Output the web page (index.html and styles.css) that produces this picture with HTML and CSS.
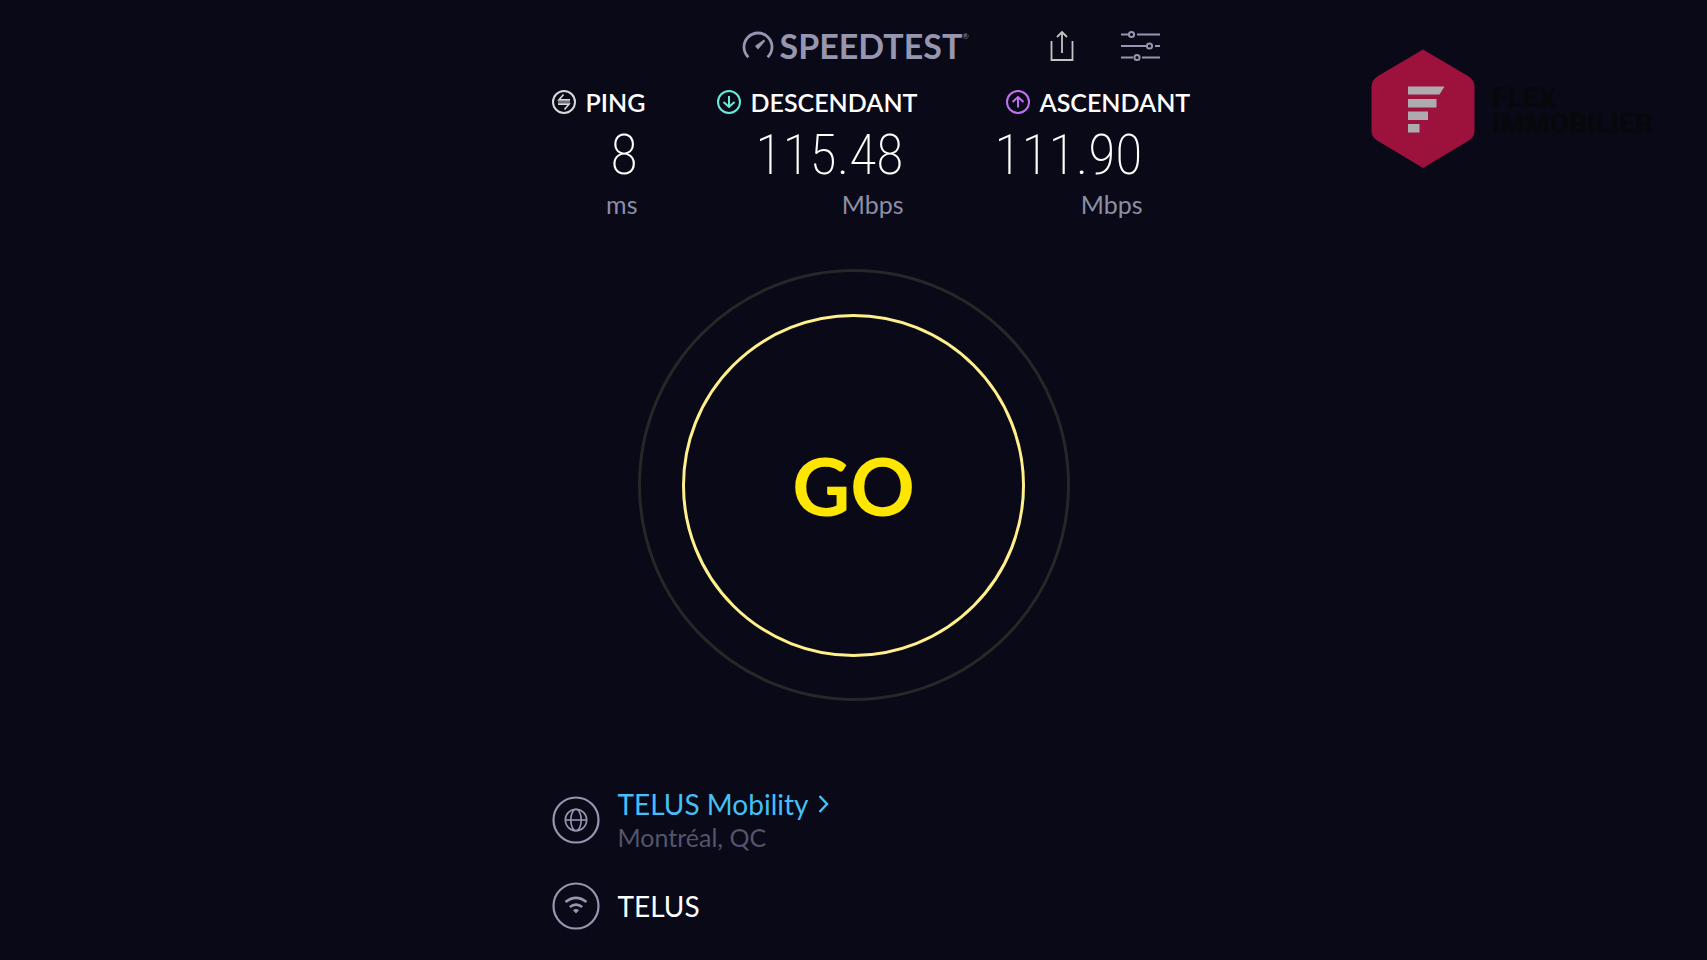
FILE: index.html
```
<!DOCTYPE html>
<html lang="fr">
<head>
<meta charset="utf-8">
<meta name="viewport" content="width=device-width, initial-scale=1">
<title>Speedtest</title>
<link rel="stylesheet" href="styles.css">
</head>
<body>
<main class="panel">
  <header class="topbar">
    <div class="brand">
      <svg class="brand-icon" width="32" height="32" viewBox="0 0 32 32" fill="none" aria-hidden="true">
        <path d="M6.400 27.200A14 14 0 1 1 25.600 27.200" stroke="currentColor" stroke-width="2.800"/>
        <path d="M22 9.500L13 16L16 19.500L23.200 11Z" fill="currentColor"/>
      </svg>
      <h1 class="brand-name">SPEEDTEST<sup class="brand-mark">®</sup></h1>
    </div>
    <div class="actions">
      <button class="icon-button icon-button--share" type="button" aria-label="Partager">
        <svg width="24" height="32" viewBox="0 0 24 32" fill="none" stroke="currentColor" stroke-width="1.800" aria-hidden="true">
          <path d="M1.500 11V30H22.500V11M12 23V2M7 7L12 2L17 7"/>
        </svg>
      </button>
      <button class="icon-button" type="button" aria-label="Paramètres">
        <svg width="40" height="32" viewBox="0 0 40 32" fill="none" stroke="currentColor" stroke-width="2" aria-hidden="true">
          <path d="M1 4.500H8M17 4.500H40M1 16H26M35 16H40M1 27.500H13M22 27.500H40"/>
          <circle cx="11.500" cy="4.500" r="2.600"/><circle cx="29.500" cy="16" r="2.600"/><circle cx="17" cy="27.500" r="2.600"/>
        </svg>
      </button>
    </div>
  </header>

  <section class="results" aria-label="Résultats">
    <div class="result result--ping">
      <h2 class="result-label">
        <svg width="24" height="24" viewBox="0 0 24 24" fill="none" stroke="currentColor" stroke-width="2" aria-hidden="true">
          <circle cx="12" cy="12" r="11"/>
          <path d="M11.500 4.500L7 9.800H18M6 14.200H17L12.500 19.500" stroke-width="1.700"/><path d="M6 12H18" stroke-width="1"/>
        </svg>PING</h2>
      <div class="figures"><span class="value">8</span><span class="unit">ms</span></div>
    </div>
    <div class="result result--down">
      <h2 class="result-label">
        <svg width="24" height="24" viewBox="0 0 24 24" fill="none" stroke="currentColor" stroke-width="2" aria-hidden="true">
          <circle cx="12" cy="12" r="11"/><path d="M12 6V17M6.500 12L12 17L17.500 12"/>
        </svg>DESCENDANT</h2>
      <div class="figures"><span class="value">115.48</span><span class="unit">Mbps</span></div>
    </div>
    <div class="result result--up">
      <h2 class="result-label">
        <svg width="24" height="24" viewBox="0 0 24 24" fill="none" stroke="currentColor" stroke-width="2" aria-hidden="true">
          <circle cx="12" cy="12" r="11"/><path d="M12 17.500V7M6.500 12L12 7L17.500 12"/>
        </svg>ASCENDANT</h2>
      <div class="figures"><span class="value">111.90</span><span class="unit">Mbps</span></div>
    </div>
  </section>

  <div class="start">
    <button class="go" type="button"><span class="go-ring">GO</span></button>
  </div>

  <section class="connection" aria-label="Connexion">
    <div class="host">
      <svg class="host-icon" width="48" height="48" viewBox="0 0 48 48" fill="none" stroke="currentColor" aria-hidden="true">
        <circle cx="24" cy="24" r="22.500" stroke-width="2.200"/>
        <g stroke-width="1.600"><circle cx="24" cy="24" r="10.700"/><ellipse cx="24" cy="24" rx="5.200" ry="10.700"/><path d="M13 24H35"/></g>
      </svg>
      <div class="host-text">
        <a class="host-link" href="#serveur">TELUS Mobility<svg width="11" height="18" viewBox="0 0 11 18" fill="none" stroke="currentColor" stroke-width="2.500" aria-hidden="true"><path d="M1.500 1L9 9L1.500 17"/></svg></a>
        <span class="host-place">Montréal, QC</span>
      </div>
    </div>
    <div class="host">
      <svg class="host-icon" width="48" height="48" viewBox="0 0 48 48" fill="none" stroke="currentColor" aria-hidden="true">
        <circle cx="24" cy="24" r="22.500" stroke-width="2.200"/>
        <path d="M13.500 20Q24 11.800 34.500 20M17.800 25Q24 20.200 30.200 25" stroke-width="2.600"/>
        <path d="M24 31.500L21 28.200Q24 25.900 27 28.200Z" fill="currentColor" stroke="none"/>
      </svg>
      <span class="host-name">TELUS</span>
    </div>
  </section>
</main>

<aside class="watermark">
  <svg width="104" height="120" viewBox="0 0 104 120" aria-hidden="true">
    <path d="M52 0.500L97 27Q103.500 31 103.500 38V82Q103.500 88 97 92L52 119L7 92Q0.500 88 0.500 82V38Q0.500 31 7 27Z" fill="#9c123c"/>
    <path d="M37 37.500H73.500L68.500 45.500H37ZM37 50H65.500V58.500H37ZM37 62.500H57V71H37ZM37 75H48.500V83.500H37Z" fill="#adabb0"/>
  </svg>
  <p class="watermark-name">FLEX<br>IMMOBILIER</p>
</aside>
</body>
</html>
```
FILE: styles.css
```
* {
  box-sizing: border-box;
}

body {
  margin: 0;
  position: relative;
  min-height: 100vh;
  background: #090917;
  color: #fff;
  font-family: Lato, "Open Sans", sans-serif;
}

h1,
h2,
p {
  margin: 0;
}

button {
  padding: 0;
  border: 0;
  background: none;
  font: inherit;
  cursor: pointer;
}

svg {
  display: block;
  flex: none;
}

.panel {
  max-width: 684px;
  margin: 0 auto;
  padding-bottom: 28px;
}

.topbar {
  display: flex;
  justify-content: space-between;
  align-items: center;
  height: 88px;
  padding: 4px 36px 0 230px;
  color: #9696b0;
}

.brand {
  display: flex;
  align-items: center;
  gap: 6px;
}

.brand-name {
  display: flex;
  font-size: 34px;
  line-height: 40px;
  font-weight: 700;
}

.brand-mark {
  font-size: 8px;
  line-height: 20px;
  font-weight: 400;
}

.actions {
  display: flex;
  align-items: center;
  gap: 46px;
}

.icon-button {
  color: #9696b0;
}

.icon-button--share {
  color: #c4c4c4;
}

.results {
  display: grid;
  grid-template-columns: 165px 289px auto;
  justify-content: start;
  padding-left: 40px;
}

.result-label {
  display: flex;
  align-items: center;
  gap: 10px;
  font-size: 25px;
  line-height: 28px;
  font-weight: 600;
}

.result-label svg {
  color: #d8d8dc;
}

.result--down svg {
  color: #6aeadc;
}

.result--up svg {
  color: #bf71f2;
}

.figures {
  display: flex;
  flex-direction: column;
  align-items: flex-end;
  width: 187px;
}

.result--ping .figures {
  width: 86px;
}

.result--up .figures {
  width: 137px;
}

.value {
  margin: 8px 0;
  font-family: "Roboto Condensed", Roboto, sans-serif;
  font-size: 56px;
  line-height: 62px;
  font-weight: 200;
}

.unit {
  color: #8d8da6;
  font-size: 25px;
  line-height: 20px;
}

.start {
  display: flex;
  justify-content: center;
  padding: 55px 0 86px;
}

.go {
  display: grid;
  place-items: center;
  width: 432px;
  aspect-ratio: 1;
  border: 3px solid #272727;
  border-radius: 50%;
}

.go-ring {
  display: grid;
  place-items: center;
  width: 343px;
  aspect-ratio: 1;
  border: 3px solid #fff08c;
  border-radius: 50%;
  color: #ffe600;
  font-size: 80px;
  line-height: 80px;
  font-weight: 700;
}

.connection {
  display: grid;
  gap: 29px;
  padding-left: 40px;
}

.host {
  display: flex;
  align-items: center;
  gap: 18px;
}

.host-icon {
  color: #9696b0;
}

.host-text {
  display: flex;
  flex-direction: column;
}

.host-link {
  display: flex;
  align-items: center;
  gap: 10px;
  color: #45bff5;
  font-size: 28px;
  line-height: 34px;
  text-decoration: none;
}

.host-place {
  color: #54546a;
  font-size: 25px;
  line-height: 32px;
}

.host-name {
  font-size: 28px;
  line-height: 34px;
}

.watermark {
  position: absolute;
  top: 49px;
  right: 54px;
  display: flex;
  align-items: center;
  gap: 17px;
}

.watermark-name {
  padding-top: 4px;
  color: #06080c;
  font-family: Roboto, sans-serif;
  font-size: 28px;
  line-height: 26px;
  font-weight: 900;
}
```
